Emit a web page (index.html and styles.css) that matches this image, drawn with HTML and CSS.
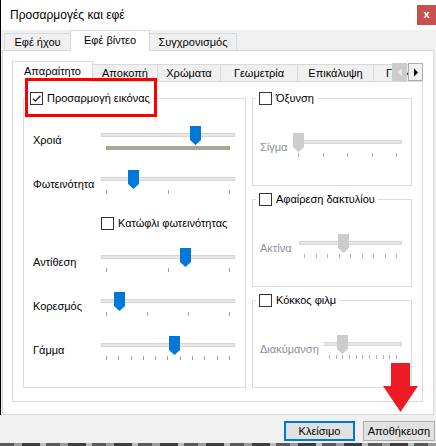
FILE: index.html
```html
<!DOCTYPE html>
<html lang="el">
<head>
  <meta charset="UTF-8">
  <title>Προσαρμογές και εφέ</title>
  <link rel="stylesheet" href="styles.css">
</head>
<body>
  <div class="window">
    <!-- γραμμή τίτλου -->
    <div class="titlebar">
      <span class="title">Προσαρμογές και εφέ</span>
      <span class="close">x</span>
    </div>
    <div class="main">
      <div class="tabs outer-tabs">
        <div class="tab">Εφέ ήχου</div>
        <div class="tab active">Εφέ βίντεο</div>
        <div class="tab">Συγχρονισμός</div>
      </div>
      <div class="page">
        <div class="tabs inner-tabs">
          <div class="tab active">Απαραίτητο</div>
          <div class="tab">Αποκοπή</div>
          <div class="tab">Χρώματα</div>
          <div class="tab">Γεωμετρία</div>
          <div class="tab">Επικάλυψη</div>
          <div class="tab">Γενικά</div>
          <div class="scroll">
            <span class="sbtn off"><svg width="6" height="9" viewBox="0 0 6 9"><path d="M5 0.5 L1 4.5 L5 8.5 Z" fill="#e9e9e9"/></svg></span>
            <span class="sbtn"><svg width="6" height="9" viewBox="0 0 6 9"><path d="M1 0.5 L5 4.5 L1 8.5 Z" fill="#000"/></svg></span>
          </div>
        </div>
        <div class="subpage">
          <fieldset class="group main-group">
            <legend><span class="check on"><svg width="11" height="11" viewBox="0 0 11 11"><path d="M1.8 5.6 L4.3 8.1 L9.4 2.8" fill="none" stroke="#222" stroke-width="1.3"/></svg></span>Προσαρμογή εικόνας</legend>
            <div class="rows">
              <div class="row">
                <span class="lbl">Χροιά</span>
                <div class="slider">
                  <div class="track"></div>
                  <div class="bar"></div>
                  <span class="thumb" style="left:89px"></span>
                </div>
              </div>
              <div class="row">
                <span class="lbl">Φωτεινότητα</span>
                <div class="slider">
                  <div class="track"></div>
                  <div class="ticks"><i></i><i></i><i></i></div>
                  <span class="thumb" style="left:27px"></span>
                </div>
              </div>
              <div class="check-row">
                <span class="check"></span>Κατώφλι φωτεινότητας
              </div>
              <div class="row">
                <span class="lbl">Αντίθεση</span>
                <div class="slider">
                  <div class="track"></div>
                  <div class="ticks"><i></i><i></i><i></i></div>
                  <span class="thumb" style="left:79px"></span>
                </div>
              </div>
              <div class="row">
                <span class="lbl">Κορεσμός</span>
                <div class="slider">
                  <div class="track"></div>
                  <div class="ticks"><i></i><i></i><i></i><i></i></div>
                  <span class="thumb" style="left:13px"></span>
                </div>
              </div>
              <div class="row">
                <span class="lbl">Γάμμα</span>
                <div class="slider">
                  <div class="track"></div>
                  <div class="ticks"><i></i><i></i><i></i><i></i><i></i><i></i><i></i><i></i><i></i><i></i><i></i></div>
                  <span class="thumb" style="left:68px"></span>
                </div>
              </div>
            </div>
          </fieldset>

          <div class="side">
            <fieldset class="group">
              <legend><span class="check"></span>Όξυνση</legend>
              <div class="row off">
                <span class="lbl narrow">Σίγμα</span>
                <div class="slider">
                  <div class="track"></div>
                  <div class="ticks flush"><i></i><i></i><i></i><i></i><i></i></div>
                  <span class="thumb" style="left:-5px"></span>
                </div>
              </div>
            </fieldset>
            <fieldset class="group">
              <legend><span class="check"></span>Αφαίρεση δακτυλίου</legend>
              <div class="row off">
                <span class="lbl narrow2">Ακτίνα</span>
                <div class="slider">
                  <div class="track"></div>
                  <div class="ticks"><i></i><i></i><i></i><i></i><i></i><i></i><i></i><i></i><i></i></div>
                  <span class="thumb" style="left:39px"></span>
                </div>
              </div>
            </fieldset>
            <fieldset class="group">
              <legend><span class="check"></span>Κόκκος φιλμ</legend>
              <div class="row off">
                <span class="lbl wide">Διακύμανση</span>
                <div class="slider">
                  <div class="track"></div>
                  <div class="ticks"><i></i><i></i><i></i><i></i><i></i><i></i><i></i><i></i><i></i><i></i><i></i></div>
                  <span class="thumb" style="left:13px"></span>
                </div>
              </div>
            </fieldset>
          </div>
        </div>
      </div>
    </div>
    <div class="footer">
      <button class="btn default">Κλείσιμο</button>
      <button class="btn">Αποθήκευση</button>
    </div>
    <div class="desk"></div>
  </div>

  <!-- σημάνσεις πάνω στο στιγμιότυπο -->
  <div class="mark"></div>
  <svg class="arrow" width="37" height="50" viewBox="0 0 37 50">
    <path d="M9 0 H28 V23 H36 L18.5 49 L1 23 H9 Z" fill="#ed1c24"/>
  </svg>
</body>
</html>
```

FILE: styles.css
```css
/* βασικά */
body { margin: 0; width: 436px; height: 446px; overflow: hidden; background: #f0f0f0; font-family: 'Liberation Sans', Arial, sans-serif; font-size: 11px; color: #000; position: relative; }
.window { display: flex; flex-direction: column; height: 446px; }

/* τίτλος */
.titlebar { height: 30px; background: #fff; border-left: 1px solid #000; display: flex; align-items: flex-start; justify-content: space-between; box-sizing: border-box; }
.title { font-size: 12px; line-height: 16px; margin: 7px 0 0 9px; }
.close { width: 19px; height: 20px; margin-top: 5px; background: #c75050; color: #fff; font-weight: bold; font-size: 11px; line-height: 18px; text-align: center; }

.main { border-left: 1px solid #000; background: #f0f0f0; }

/* καρτέλες */
.tabs { display: flex; align-items: flex-end; position: relative; z-index: 1; }
.tab { box-sizing: border-box; height: 17px; border: 1px solid #d9d9d9; border-bottom: none; margin-left: -1px; background: #f0f0f0; text-align: center; line-height: 17px; white-space: nowrap; overflow: hidden; }
.tab.active { height: 21px; background: #fff; margin-bottom: -1px; line-height: 19px; }

.outer-tabs { height: 20px; padding-left: 3px; }
.outer-tabs .tab:nth-child(1) { width: 67px; margin-left: 0; }
.outer-tabs .tab:nth-child(2) { width: 80px; }
.outer-tabs .tab:nth-child(3) { width: 88px; }

.page { box-sizing: border-box; height: 365px; margin: 0 2px 0 1px; background: #fff; border: 1px solid #d9d9d9; padding: 10px 10px 0 9px; }

.inner-tabs { height: 20px; }
.inner-tabs .tab { background: #f0f0f0; }
.inner-tabs .tab.active { background: #fff; }
.inner-tabs .tab:nth-child(1) { width: 81px; margin-left: 0; }
.inner-tabs .tab:nth-child(2) { width: 66px; }
.inner-tabs .tab:nth-child(3) { width: 64px; }
.inner-tabs .tab:nth-child(4) { width: 78px; }
.inner-tabs .tab:nth-child(5) { width: 77px; }
.inner-tabs .tab:nth-child(6) { width: 50px; text-align: left; padding-left: 12px; }
.scroll { position: absolute; left: 380px; top: 2px; display: flex; }
.sbtn { box-sizing: border-box; width: 15px; height: 18px; display: flex; align-items: center; justify-content: center; }
.sbtn.off { background: #cccccc; }
.sbtn:not(.off) { background: #f0f0f0; border: 1px solid #adadad; margin-left: 1px; }

.subpage { box-sizing: border-box; height: 321px; border: 1px solid #d9d9d9; padding: 10px 10px 0 10px; display: flex; gap: 6px; }

/* ομάδες */
.group { margin: 0; padding: 0; border: 1px solid #dcdcdc; min-width: 0; }
.group legend { margin-left: 3px; padding: 0 3px; display: flex; align-items: center; line-height: 13px; height: 13px; white-space: nowrap; }
.main-group { width: 223px; height: 296px; box-sizing: border-box; }
.main-group .rows { padding: 21px 10px 0 9px; }
.side { flex: 1; display: flex; flex-direction: column; gap: 7px; height: 296px; }
.side .group { flex: 1; box-sizing: border-box; }
.side .row { padding: 28px 9px 0 7px; }

.check { box-sizing: border-box; width: 13px; height: 13px; border: 1px solid #333; background: #fff; margin-right: 4px; display: inline-flex; align-items: center; justify-content: center; flex: none; }

.row { display: flex; height: 44px; }
.side .row { height: auto; }
.lbl { width: 68px; flex: none; line-height: 16px; padding-top: 6px; white-space: nowrap; }
.lbl.narrow { width: 38px; }
.lbl.narrow2 { width: 39px; }
.lbl.wide { width: 64px; }
.row.off .lbl { color: #8b909b; }

.check-row { height: 34px; box-sizing: border-box; padding: 3px 0 0 68px; display: flex; align-items: flex-start; line-height: 13px; white-space: nowrap; }

/* ολισθητές */
.slider { position: relative; flex: 1; height: 30px; }
.track { box-sizing: border-box; height: 4px; margin-top: 7px; background: #e7e7e7; border: 1px solid #d6d6d6; }
.ticks { display: flex; justify-content: space-between; padding: 0 5px; margin-top: 9px; }
.ticks.flush { padding-left: 0; }
.ticks i { width: 1px; height: 4px; background: #a6a296; }
.bar { height: 4px; margin: 9px 5px 0; background: #a9a597; }
.thumb { position: absolute; top: 0; width: 11px; height: 19px; background: #0078d7; clip-path: polygon(0 0, 100% 0, 100% 14px, 50% 100%, 0 14px); }
.row.off .thumb { background: #cccccc; }
.row.off .ticks i { background: #b3b3b3; }

/* κουμπιά */
.footer { height: 28px; box-sizing: border-box; padding: 6px 1px 0 0; display: flex; justify-content: flex-end; gap: 8px; }
.btn { box-sizing: border-box; height: 20px; width: 72px; background: #e1e1e1; border: 1px solid #adadad; font-family: inherit; font-size: 11px; padding: 0; color: #000; }
.btn.default { width: 71px; border: 2px solid #0078d7; }
.desk { height: 3px; background: repeating-linear-gradient(90deg, #5a5a5a 0 14px, #9a9a9a 14px 22px, #3d3d3d 22px 40px, #bdbdbd 40px 46px); }

/* σημάνσεις */
.mark { position: absolute; z-index: 5; left: 25px; top: 78px; width: 132px; height: 39px; box-sizing: border-box; border: 3px solid #ff0000; }
.arrow { position: absolute; z-index: 5; left: 382px; top: 363px; }
```
